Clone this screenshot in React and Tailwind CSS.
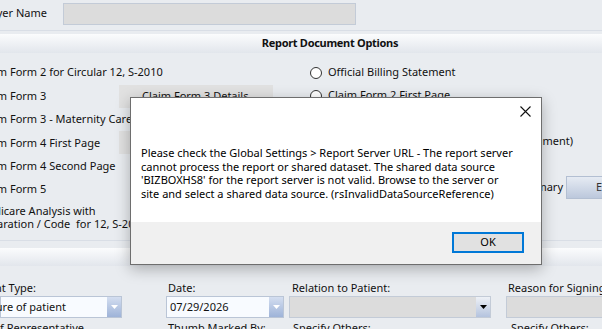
import React from "react";

const F = { fontFamily: '"Noto Sans", "Open Sans", sans-serif' };

function Radio({ children }) {
  return (
    <div className="flex items-center h-[23px] whitespace-nowrap">
      <span className="w-[12px] h-[12px] rounded-full border border-[#333] bg-white mr-[6px] shrink-0" />
      <span>{children}</span>
    </div>
  );
}

function ArrowBlue() {
  return (
    <div className="w-[14px] h-full shrink-0 bg-gradient-to-b from-[#d4def0] to-[#9eb3d8] flex items-center justify-center">
      <svg width="7" height="4" viewBox="0 0 7 4"><path d="M0 0h7L3.5 4z" fill="#fff" /></svg>
    </div>
  );
}

function ArrowBlack() {
  return (
    <div className="w-[14px] h-full shrink-0 bg-gradient-to-b from-[#eef1f6] to-[#b4c3de] flex items-center justify-center">
      <svg width="7" height="4" viewBox="0 0 7 4"><path d="M0 0h7L3.5 4z" fill="#000" /></svg>
    </div>
  );
}

export default function App() {
  const leftRows = [
    "Claim Form 2 for Circular 12, S-2010",
    "Claim Form 3",
    "Claim Form 3 - Maternity Care",
    "Claim Form 4 First Page",
    "Claim Form 4 Second Page",
    "Claim Form 5",
  ];
  return (
    <div className="relative w-[602px] h-[329px] overflow-hidden bg-[#e9ecf0] text-[11px] text-[#111]" style={F}>
      {/* Row 1 */}
      <div className="flex items-center h-[27px]">
        <div className="w-[63px] flex justify-end pr-[16px] whitespace-nowrap">Payer Name</div>
        <div className="w-[293px] h-[22px] bg-[#dcdcdc] border border-[#c3cbd7]" />
      </div>
      <div className="mt-[3px] h-px bg-[#d9dee6]" />
      <div className="mt-[3px] h-[19px] bg-gradient-to-b from-[#fbfcfd] to-[#e2e6ec] flex items-center justify-center font-bold tracking-[-0.3px] pl-[58px]">
        Report Document Options
      </div>

      {/* Options */}
      <div className="flex pt-[8px] h-[187px]">
        <div className="w-[332px] -ml-[22px] flex flex-col shrink-0">
          {leftRows.map((t, i) => (
            <div key={t} className="flex items-center h-[23.4px] whitespace-nowrap">
              <span className="w-[141px] shrink-0">{t}</span>
              {i === 1 && (
                <div className="h-[23px] w-[154px] bg-[#e1e1e1] flex items-center pl-[23px]">Claim Form 3 Details..</div>
              )}
              {i === 3 && (
                <div className="h-[23px] w-[154px] bg-[#e1e1e1] flex items-center pl-[23px]">Claim Form 4 Details..</div>
              )}
            </div>
          ))}
          <div className="leading-[13px] pt-[3px] whitespace-nowrap">
            <div>Medicare Analysis with</div>
            <div>Separation / Code&nbsp; for 12, S-2010</div>
          </div>
        </div>
        <div className="flex flex-col">
          <Radio>Official Billing Statement</Radio>
          <Radio>Claim Form 2 First Page</Radio>
          <Radio>Claim Form 2 Second Page</Radio>
          <div className="flex items-center h-[23px] w-[263px] justify-end whitespace-nowrap">Claim Form 2 (Whole Document)</div>
          <Radio>Claim Form 3 First Page</Radio>
          <div className="flex items-center h-[23px] whitespace-nowrap">
            <div className="w-[253px] flex justify-end">Claim Form 3 Summary</div>
            <div className="ml-[3px] w-[60px] h-[23px] bg-gradient-to-b from-[#e6ebf3] to-[#bcc8dc] border border-[#b3bfd2] flex items-center pl-[29px] text-[#333]">Edit</div>
          </div>
        </div>
      </div>

      <div className="h-px bg-[#d9dee6]" />
      <div className="mt-[7px] h-[18px] bg-gradient-to-b from-[#fbfcfd] to-[#e2e6ec]" />

      {/* Bottom form */}
      <div className="flex pt-[14px] whitespace-nowrap">
        <div className="w-[166px] flex flex-col shrink-0">
          <div className="w-[36px] h-[17px] flex items-center justify-end">Consent Type:</div>
          <div className="mt-[-1px] w-[122px] h-[22px] flex bg-[#f8fbff] border border-[#bac5d6]">
            <div className="flex-1 min-w-0 flex items-center justify-end pr-[41px]">Signature of patient</div>
            <ArrowBlue />
          </div>
          <div className="mt-[2px] w-[84px] flex justify-end">Name of Representative</div>
        </div>
        <div className="w-[123px] flex flex-col shrink-0">
          <div className="h-[17px] pl-[2px] flex items-center">Date:</div>
          <div className="mt-[-1px] w-[118px] h-[22px] flex bg-[#f8fbff] border border-[#bac5d6]">
            <div className="flex-1 flex items-center pl-[3px]">07/29/2026</div>
            <ArrowBlue />
          </div>
          <div className="mt-[2px] pl-[2px]">Thumb Marked By:</div>
        </div>
        <div className="w-[217px] flex flex-col shrink-0">
          <div className="h-[17px] pl-[3px] flex items-center">Relation to Patient:</div>
          <div className="mt-[-1px] w-[202px] h-[22px] flex bg-[#dcdcdc] border border-[#c3cbd7]">
            <div className="flex-1" />
            <ArrowBlack />
          </div>
          <div className="mt-[2px] pl-[4px]">Specify Others:</div>
        </div>
        <div className="w-[120px] flex flex-col shrink-0">
          <div className="h-[17px] pl-[2px] flex items-center">Reason for Signing:</div>
          <div className="mt-[-1px] h-[22px] bg-[#dcdcdc] border border-[#c3cbd7]" />
          <div className="mt-[2px] pl-[5px]">Specify Others:</div>
        </div>
      </div>

      {/* Dialog */}
      <div className="absolute left-[130px] top-[97px] w-[412px] h-[168px] border border-[#6e6e6e] bg-white flex flex-col shadow-[0_4px_14px_rgba(0,0,0,0.28)]">
        <div className="flex-1 relative">
          <svg className="absolute right-[10px] top-[8px]" width="11" height="11" viewBox="0 0 11 11">
            <path d="M0.5 0.5L10.5 10.5M10.5 0.5L0.5 10.5" stroke="#111" strokeWidth="1.1" />
          </svg>
          <div className="pl-[10px] pt-[48px] leading-[13.5px] text-black whitespace-nowrap">
            <div>Please check the Global Settings &gt; Report Server URL - The report server</div>
            <div>cannot process the report or shared dataset. The shared data source</div>
            <div>'BIZBOXHS8' for the report server is not valid. Browse to the server or</div>
            <div>site and select a shared data source. (rsInvalidDataSourceReference)</div>
          </div>
        </div>
        <div className="h-[42px] bg-[#f0f0f0] flex items-start justify-end pr-[17px] pt-[10px]">
          <div className="w-[72px] h-[21px] border-2 border-[#0078d7] bg-[#e1e1e1] flex items-center justify-center text-black">OK</div>
        </div>
      </div>
    </div>
  );
}
